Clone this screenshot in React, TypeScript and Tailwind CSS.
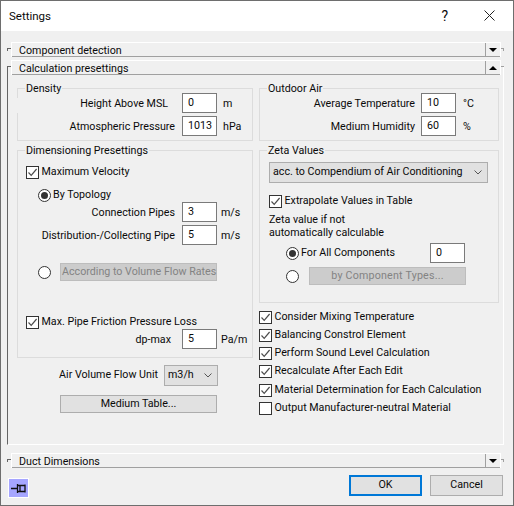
import type { ReactNode } from "react";

// ─── Small Win32 style controls ────────────────────────────────────────────

function Group({ title, className, notch = false, children }: { title: string; className: string; notch?: boolean; children: ReactNode }) {
  return (
    <div className={`relative border border-[#dcdcdc] ${className}`}>
      <span className="absolute left-[7px] top-[-8px] bg-[#f0f0f0] px-px leading-[15px]">{title}</span>
      {notch && <span className="absolute left-[-1px] top-[9px] w-px h-[15px] bg-[#f0f0f0]" />}
      {children}
    </div>
  );
}

function Field({ value, className = "" }: { value: string; className?: string }) {
  return (
    <div className={`w-[35px] h-[20px] shrink-0 bg-white border border-[#7a7a7a] flex items-center pl-[5px] leading-none ${className}`}>
      {value}
    </div>
  );
}

function LabeledField({ label, value, unit, labelWidth, fieldMargin, className = "" }: { label: string; value: string; unit: string; labelWidth: string; fieldMargin: string; className?: string }) {
  return (
    <div className={`flex items-center h-[20px] ${className}`}>
      <span className={`pt-[2px] text-right whitespace-nowrap ${labelWidth}`}>{label}</span>
      <Field value={value} className={fieldMargin} />
      <span className="pt-[2px] whitespace-nowrap">{unit}</span>
    </div>
  );
}

function Check({ label, checked = true, className = "" }: { label: string; checked?: boolean; className?: string }) {
  return (
    <div className={`flex items-center h-[14px] whitespace-nowrap ${className}`}>
      <div className="w-[13px] h-[13px] bg-white border border-[#333333] shrink-0 mr-[2.5px]">
        {checked && (
          <svg viewBox="0 0 11 11" className="w-[11px] h-[11px]">
            <path d="M1.5 5.5 L4.2 8.3 L9.6 2" fill="none" stroke="#4d4d4d" strokeWidth="1.2" />
          </svg>
        )}
      </div>
      <span>{label}</span>
    </div>
  );
}

function Radio({ on = false }: { on?: boolean }) {
  return (
    <div className="w-[13px] h-[13px] rounded-full bg-white border border-[#333333] shrink-0 flex items-center justify-center">
      {on && <div className="w-[7px] h-[7px] rounded-full bg-[#333333]" />}
    </div>
  );
}

function Chevron() {
  return (
    <svg viewBox="0 0 8 5" className="w-[8px] h-[5px] shrink-0">
      <path d="M0.5 0.5 L4 4 L7.5 0.5" fill="none" stroke="#555555" strokeWidth="1" />
    </svg>
  );
}

function SectionBar({ title, up = false, className = "" }: { title: string; up?: boolean; className?: string }) {
  return (
    <div className={`relative z-10 flex h-[15px] ml-[4px] mr-[3px] bg-[#f0f0f0] border-t border-white border-b border-b-[#a0a0a0] ${className}`}>
      <div className="flex-1 border-l border-white pl-[7px] leading-[15px] h-[14px]">{title}</div>
      <div className="w-[16px] h-[14px] border-l border-[#a0a0a0] border-r border-r-white flex items-center justify-center">
        <div className={`w-0 h-0 border-x-[4px] border-x-transparent ${up ? "border-b-[4px] border-b-black" : "border-t-[4px] border-t-black"}`} />
      </div>
    </div>
  );
}

// A collapsed section: bar with the little frame ticks left and right of it
function CollapsedSection({ title, className = "" }: { title: string; className?: string }) {
  return (
    <div className={`relative ${className}`}>
      <span className="absolute left-0 top-[6px] w-[4px] h-[3px] border-l border-t border-[#646464]" />
      <span className="absolute right-0 top-[6px] w-[4px] h-[3px] border-r border-t border-[#a0a0a0]" />
      <SectionBar title={title} />
    </div>
  );
}

// ─── Page ──────────────────────────────────────────────────────────────────

export default function App() {
  return (
    <div
      className="w-[514px] h-[506px] flex flex-col bg-[#f0f0f0] border border-[#6e6e6e] overflow-hidden text-[10.7px] text-[#0a0a0a]"
      style={{ fontFamily: "Roboto, 'Liberation Sans', sans-serif" }}
    >
      {/* Title bar */}
      <div className="h-[30px] shrink-0 bg-white flex items-center pl-[8px] pr-[18px] text-[11.5px]">
        <span className="flex-1 pt-[1px]">Settings</span>
        <span className="mr-[36px] text-[14px]">?</span>
        <svg viewBox="0 0 11 11" className="w-[11px] h-[11px] mb-[2px]">
          <path d="M0.5 0.5 L10.5 10.5 M10.5 0.5 L0.5 10.5" stroke="#222222" strokeWidth="1" />
        </svg>
      </div>

      <CollapsedSection title="Component detection" className="mt-[11px] ml-[6px] mr-[9px]" />

      {/* Calculation presettings */}
      <div className="relative mt-[3px] ml-[6px] mr-[9px] h-[385px]">
        <SectionBar title="Calculation presettings" up />
        <div className="absolute left-0 right-0 top-[6px] bottom-0 border-l border-l-[#646464] border-r border-r-white border-b border-b-white" />
        <span className="absolute left-0 top-[6px] w-[4px] border-t border-[#646464]" />
        <span className="absolute right-0 top-[6px] w-[4px] border-t border-[#a0a0a0]" />

        <div className="relative z-10 flex pl-[10px] pt-[13px] gap-[6px]">
          {/* Left column */}
          <div className="w-[236px] shrink-0">
            <Group title="Density" notch className="h-[53px] pt-[4px]">
              <LabeledField label="Height Above MSL" value="0" unit="m" labelWidth="w-[157px] pr-[7px]" fieldMargin="ml-[7px] mr-[6px]" />
              <LabeledField label="Atmospheric Pressure" value="1013" unit="hPa" labelWidth="w-[157px]" fieldMargin="ml-[7px] mr-[6px]" className="mt-[3px]" />
            </Group>

            <Group title="Dimensioning Presettings" className="h-[208px] mt-[9px] pt-[14px]">
              <Check label="Maximum Velocity" className="ml-[8px]" />
              <div className="flex items-center gap-[2px] ml-[20px] mt-[9px] h-[14px]">
                <Radio on />
                <span>By Topology</span>
              </div>
              <LabeledField label="Connection Pipes" value="3" unit="m/s" labelWidth="w-[157px]" fieldMargin="ml-[7px] mr-[4px]" />
              <LabeledField label="Distribution-/Collecting Pipe" value="5" unit="m/s" labelWidth="w-[157px]" fieldMargin="ml-[7px] mr-[4px]" className="mt-[3px]" />
              <div className="flex items-center ml-[20px] mt-[18px] h-[18px]">
                <Radio />
                <div className="w-[157px] h-[18px] ml-[9px] bg-[#cccccc] border border-[#bdbdbd] text-[#838383] pl-[1px] leading-[16px] whitespace-nowrap">
                  According to Volume Flow Rates
                </div>
              </div>
              <Check label="Max. Pipe Friction Pressure Loss" className="ml-[8px] mt-[34px]" />
              <LabeledField label="dp-max" value="5" unit="Pa/m" labelWidth="w-[157px] pr-[4px]" fieldMargin="ml-[7px] mr-[4px]" />
            </Group>

            <div className="flex items-center h-[21px] mt-[7px]">
              <span className="w-[141px] text-right whitespace-nowrap">Air Volume Flow Unit</span>
              <div className="w-[54px] h-[21px] ml-[6px] bg-[#e1e1e1] border border-[#adadad] flex items-center justify-between pl-[3px] pr-[5px]">
                <span>m3/h</span>
                <Chevron />
              </div>
            </div>
            <div className="w-[157px] h-[18px] mt-[9px] ml-[43px] bg-[#e1e1e1] border border-[#adadad] text-center leading-[16px]">
              Medium Table...
            </div>
          </div>

          {/* Right column */}
          <div className="w-[240px] shrink-0">
            <Group title="Outdoor Air" className="h-[53px] pt-[4px]">
              <LabeledField label="Average Temperature" value="10" unit="°C" labelWidth="w-[155px]" fieldMargin="ml-[6px] mr-[7px]" />
              <LabeledField label="Medium Humidity" value="60" unit="%" labelWidth="w-[155px]" fieldMargin="ml-[6px] mr-[7px]" className="mt-[3px]" />
            </Group>

            <Group title="Zeta Values" className="h-[153px] mt-[9px] pt-[11px] pl-[9px]">
              <div className="w-[219px] h-[21px] bg-[#e1e1e1] border border-[#adadad] flex items-center justify-between pl-[3px] pr-[5px]">
                <span className="whitespace-nowrap">acc. to Compendium of Air Conditioning</span>
                <Chevron />
              </div>
              <Check label="Extrapolate Values in Table" className="mt-[11px]" />
              <div className="mt-[5px] leading-[13px]">
                Zeta value if not
                <br />
                automatically calculable
              </div>
              <div className="flex items-center h-[20px] mt-[4px] ml-[17px]">
                <Radio on />
                <span className="ml-[2px] w-[129px] pt-[1px] whitespace-nowrap">For All Components</span>
                <Field value="0" />
              </div>
              <div className="flex items-center h-[18px] mt-[4px] ml-[17px]">
                <Radio />
                <div className="w-[157px] h-[18px] ml-[10px] bg-[#cccccc] border border-[#bdbdbd] text-[#838383] text-center leading-[16px] tracking-[0.2px]">
                  by Component Types...
                </div>
              </div>
            </Group>

            <div className="mt-[7px] flex flex-col gap-[4px]">
              <Check label="Consider Mixing Temperature" />
              <Check label="Balancing Constrol Element" />
              <Check label="Perform Sound Level Calculation" />
              <Check label="Recalculate After Each Edit" />
              <Check label="Material Determination for Each Calculation" className="mt-px" />
              <Check label="Output Manufacturer-neutral Material" checked={false} />
            </div>
          </div>
        </div>
      </div>

      <CollapsedSection title="Duct Dimensions" className="mt-[8px] ml-[6px] mr-[9px]" />

      {/* Footer */}
      <div className="flex items-start mt-[7px] pl-[7px] pr-[10px]">
        <div className="mt-[3px] w-[21px] h-[20px] bg-[#a6a6ff] border border-white flex items-center justify-center">
          <svg viewBox="0 0 15 9" className="w-[15px] h-[9px]">
            <path d="M0 4.5 H6 M6.5 0 V9 M6.5 1.5 H9 V7.5 H6.5 M9 1.5 H13.5 M9 7.5 H13.5 M14 0.5 V8.5" fill="none" stroke="#101010" strokeWidth="1.3" />
          </svg>
        </div>
        <div className="flex-1" />
        <div className="w-[73px] h-[21px] bg-[#e1e1e1] border-2 border-[#0078d7] flex items-center justify-center">OK</div>
        <div className="w-[73px] h-[21px] ml-[8px] bg-[#e1e1e1] border border-[#adadad] flex items-center justify-center">Cancel</div>
      </div>
    </div>
  );
}
